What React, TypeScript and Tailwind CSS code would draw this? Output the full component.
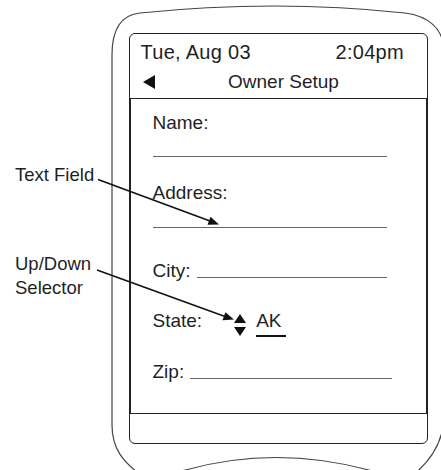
const font = { fontFamily: '"Liberation Sans", Arial, sans-serif' }

const Field = ({ label }: { label: string }) => (
  <>
    <div className="h-[24px] leading-[24px]">{label}</div>
  </>
)

const Overlay = () => (
  <svg
    className="absolute inset-0 pointer-events-none"
    width="441"
    height="470"
    viewBox="0 0 441 470"
    fill="none"
  >
    {/* device body outline */}
    <path
      d="M112 55 C112 30 120 15 140 13 Q275 -1 405 13 C428 16 443 28 444 50 L444 415 C444 440 432 460 412 476"
      stroke="#444"
      strokeWidth="1.2"
    />
    <path d="M112 55 L112 425 C112 448 122 462 145 478" stroke="#444" strokeWidth="1.2" />
    <path d="M160 478 Q275 437 395 478" stroke="#444" strokeWidth="1.2" />

    {/* callout arrows */}
    <line x1="98" y1="179.5" x2="210" y2="221" stroke="#111" strokeWidth="1.6" />
    <polygon points="219,224.5 207.5,224.8 210.5,216.8" fill="#111" />
    <line x1="97" y1="270" x2="225" y2="316.5" stroke="#111" strokeWidth="1.6" />
    <polygon points="234,319.5 222.5,320.2 225.4,312.2" fill="#111" />
  </svg>
)

export default function App() {
  return (
    <div className="relative w-[441px] h-[470px] bg-white overflow-hidden text-[#1f1f1f]" style={font}>
      <div className="flex">
        {/* callout labels */}
        <div className="w-[129px] pl-[15px] pt-[163px] text-[18.5px]">
          <div className="h-[24px] leading-[24px]">Text Field</div>
          <div className="mt-[65px] leading-[24px]">
            <div>Up/Down</div>
            <div>Selector</div>
          </div>
        </div>

        {/* device screen */}
        <div className="mt-[33px] w-[299px] h-[411px] flex flex-col border-[1.5px] border-[#222] rounded-[6px] bg-white text-[19px]">
          <div className="h-[65px] border-b-[1.5px] border-[#222] pt-[3px]">
            <div className="flex justify-between pl-[10.5px] pr-[23px] h-[30px] leading-[30px] text-[20px] tracking-[0.3px]">
              <span>Tue, Aug 03</span>
              <span>2:04pm</span>
            </div>
            <div className="flex items-center pl-[13px] h-[30px] leading-[30px]">
              <svg width="12" height="14" viewBox="0 0 12 14">
                <polygon points="12,0 12,14 0,7" fill="#111" />
              </svg>
              <span className="ml-[73px]">Owner Setup</span>
            </div>
          </div>

          <div className="flex-1 border-x-[1.5px] border-[#222] pl-[21.5px]">
            <div className="mt-[12px]">
              <Field label="Name:" />
            </div>
            <div className="mt-[21px] w-[234px] h-px bg-[#666]" />
            <div className="mt-[24px]">
              <Field label="Address:" />
            </div>
            <div className="mt-[22px] w-[234px] h-px bg-[#666]" />

            <div className="mt-[31px] w-[234px] flex items-end h-[24px] leading-[24px]">
              <span>City:</span>
              <div className="flex-1 ml-[6px] mb-[5px] h-px bg-[#666]" />
            </div>

            <div className="mt-[26px] flex items-start h-[28px] leading-[24px]">
              <span>State:</span>
              <svg className="ml-[32px] mt-[4.5px]" width="12" height="22" viewBox="0 0 12 22">
                <polygon points="6,0 12,9 0,9" fill="#111" />
                <polygon points="0,13 12,13 6,22" fill="#111" />
              </svg>
              <span className="ml-[10px] pr-[4px] pb-[2px] border-b-2 border-[#111]">AK</span>
            </div>

            <div className="mt-[23px] w-[239px] flex items-end h-[24px] leading-[24px]">
              <span>Zip:</span>
              <div className="flex-1 ml-[6px] mb-[5px] h-px bg-[#666]" />
            </div>
          </div>

          <div className="h-[30px] border-t-[1.5px] border-[#222]" />
        </div>
      </div>
      <Overlay />
    </div>
  )
}
